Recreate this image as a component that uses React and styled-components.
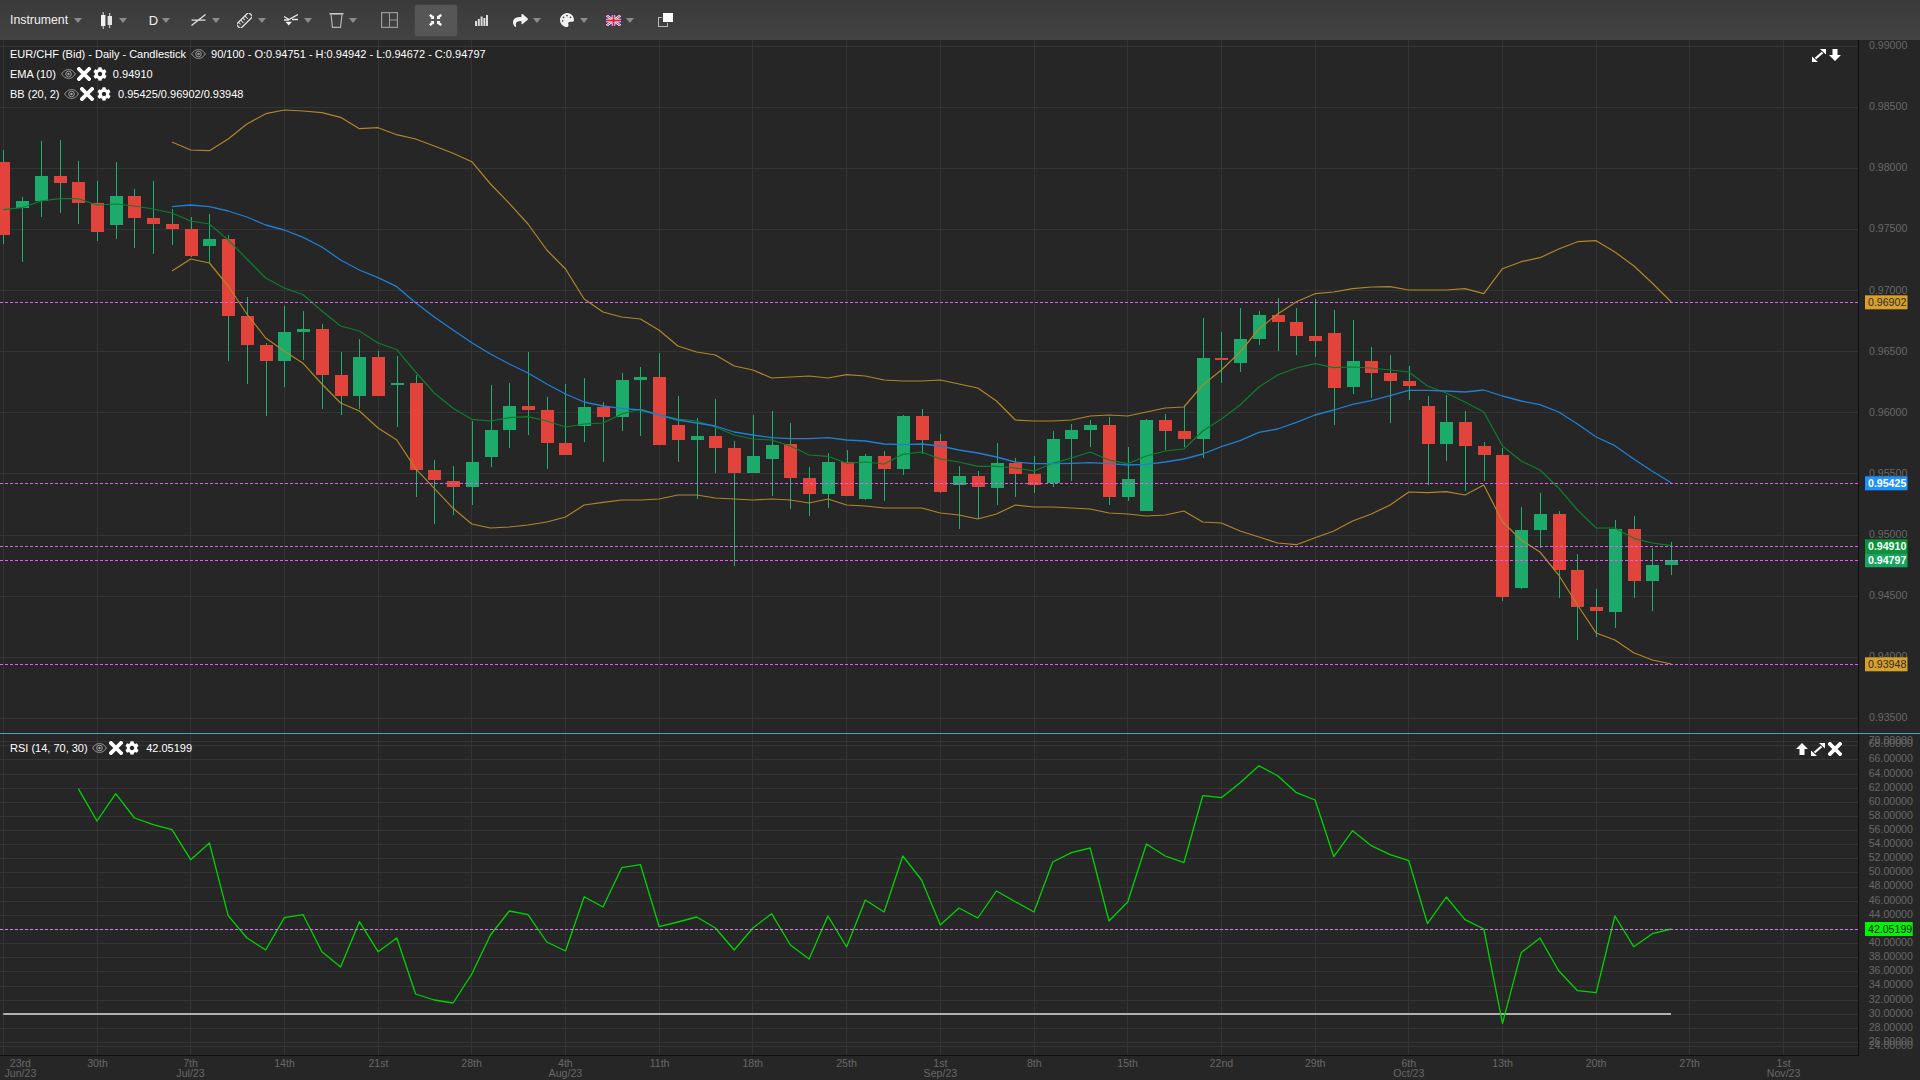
import React from 'react';
import styled, { createGlobalStyle } from 'styled-components';
import { FaCog, FaPalette, FaShare } from 'react-icons/fa';

const GlobalStyle = createGlobalStyle`
  html, body { margin: 0; padding: 0; background: #262626; }
  body { font-family: "Liberation Sans", Arial, sans-serif; overflow: hidden; }
`;

/* ---------- data ---------- */
const STEP = 18.74;
const X0 = 3.3;
const xAt = (i) => X0 + i * STEP;

const seg = (base, rows) => rows.map((r) => r.map((v) => (typeof v === 'number' ? base + v / 3 : v)));

const candles = [
  ...seg(110, [
    [120, 156, 375, 402, 'r'], [261, 273, 294, 455, 'g'], [93, 198, 273, 321, 'g'], [90, 198, 219, 309, 'r'],
    [153, 216, 279, 342, 'r'], [213, 279, 366, 393, 'r'], [156, 258, 345, 387, 'g'], [237, 258, 324, 414, 'r'],
    [213, 324, 342, 432, 'r'], [297, 342, 357, 405, 'r'], [321, 357, 438, 442, 'r'], [312, 387, 408, 460, 'g'],
    [375, 387, 618, 753, 'r'], [561, 618, 705, 822, 'r'], [699, 705, 753, 918, 'r'], [588, 666, 753, 831, 'g'],
    [603, 657, 666, 750, 'g'], [642, 657, 795, 897, 'r'], [726, 795, 858, 915, 'r'], [687, 741, 858, 897, 'g'],
    [723, 741, 858, 858, 'r'], [738, 819, 825, 951, 'g'], [795, 819, 1080, 1161, 'r'], [1050, 1080, 1110, 1242, 'r'],
    [1068, 1113, 1131, 1215, 'r'], [933, 1056, 1131, 1185, 'g'], [825, 960, 1041, 1071, 'g'], [819, 888, 960, 1014, 'g'],
    [726, 888, 900, 975, 'r'], [861, 900, 999, 1077, 'r'], [822, 999, 1035, 1035, 'r'], [804, 891, 948, 996, 'g'],
    [876, 891, 921, 1056, 'r'], [789, 810, 921, 963, 'g'],
  ]),
  ...seg(300, [
    [201, 231, 240, 408, 'g'], [159, 231, 435, 435, 'r'], [288, 375, 420, 486, 'r'], [354, 408, 420, 597, 'g'],
    [297, 408, 444, 519, 'r'], [423, 444, 519, 798, 'r'], [345, 468, 519, 519, 'g'], [333, 435, 477, 588, 'g'],
    [369, 432, 534, 627, 'r'], [501, 534, 582, 648, 'r'], [459, 486, 582, 624, 'g'], [450, 486, 588, 588, 'r'],
    [462, 468, 597, 600, 'g'], [453, 468, 507, 603, 'r'], [345, 348, 507, 525, 'g'], [327, 348, 420, 462, 'r'],
    [402, 423, 576, 579, 'r'], [498, 528, 555, 687, 'g'], [513, 528, 561, 657, 'r'], [429, 489, 564, 615, 'g'],
    [474, 489, 522, 591, 'r'], [468, 522, 555, 579, 'r'], [393, 417, 550, 561, 'g'], [372, 390, 417, 543, 'g'],
    [360, 375, 390, 441, 'g'], [351, 375, 591, 615, 'r'], [441, 537, 591, 603, 'g'], [357, 360, 633, 633, 'g'],
    [342, 360, 393, 451, 'r'], [321, 393, 417, 441, 'r'], [54, 174, 417, 474, 'g'],
  ]),
  ...seg(290, [
    [126, 204, 210, 279, 'r'], [54, 147, 219, 246, 'g'], [63, 75, 147, 165, 'g'], [24, 75, 96, 183, 'r'],
    [54, 96, 138, 195, 'r'], [27, 138, 153, 201, 'r'], [60, 129, 294, 405, 'r'], [90, 213, 291, 312, 'g'],
    [171, 213, 249, 324, 'r'], [195, 249, 273, 399, 'r'], [228, 273, 288, 330, 'r'], [318, 348, 462, 585, 'r'],
    [315, 396, 462, 513, 'g'], [363, 396, 468, 603, 'r'], [456, 468, 495, 573, 'r'], [474, 495, 921, 933, 'r'],
    [651, 720, 894, 897, 'g'], [609, 672, 720, 774, 'g'], [663, 672, 840, 924, 'r'], [792, 840, 951, 1050, 'r'],
    [897, 951, 963, 1041, 'r'], [690, 717, 966, 1014, 'g'], [678, 717, 873, 924, 'r'], [774, 825, 873, 963, 'g'],
    [756, 810, 825, 855, 'g'],
  ]),
];

const scale = (base, arr) => arr.map((v) => base + v / 3);

const upperBand = [
  ...scale(110, [96, 120, 122, 87, 42, 11, 0, 3, 8, 22, 56, 53, 74, 87, 108, 130, 155, 222, 280, 342, 420, 477, 567, 606, 621]),
  ...scale(300, [57, 91, 138, 156, 165, 198, 210, 234, 231, 228, 234, 224, 228, 240, 243, 243, 240, 252, 264, 303, 360, 363, 363, 360, 348, 345, 348, 336, 324, 321, 255, 210, 156, 87, 42]),
  301.7, 293.7, 292, 288.7, 287, 286.7, 290, 290, 290, 288.7, 293.7, 268.7, 261.7, 257.7, 249, 241.7, 240.7, 252, 265.7, 283.3, 302,
];

const lowerBand = [
  ...scale(110, [483, 447, 459, 528, 612, 684, 724, 760, 822, 879, 903, 954, 990, 1076, 1135, 1195]),
  524, 528, 527, 525, 522, 517, 505, 502.3, 500,
  ...scale(300, [600, 597, 585, 585, 594, 597, 600, 597, 600, 609, 597, 615, 618, 624, 624, 624, 639, 645, 657, 642, 615, 621, 621, 624, 627, 639, 642, 648, 645, 633, 666]),
  ...scale(290, [699, 723, 741, 759, 764, 743, 723, 693, 672, 645, 606, 608, 605, 615, 585, 695, 750, 786, 855, 945, 1029, 1050, 1088, 1110, 1122]),
];

const emaLine = [
  ...scale(110, [299, 293, 273, 266, 266, 285, 282, 288, 297, 309, 333, 342, 390, 447, 504, 534, 554, 603, 648, 663, 699, 719, 786, 849, 895, 928, 933, 923, 920, 933, 951, 942, 939, 912]),
  ...scale(300, [327, 345, 357, 363, 381, 405, 417, 420, 438, 465, 469, 490, 486, 492, 463, 456, 477, 486, 499, 499, 504, 513, 490, 474, 456, 480, 491, 468, 453, 447, 393]),
  ...scale(290, [387, 345, 291, 255, 234, 221, 233, 231, 234, 240, 246, 288, 309, 336, 366, 468, 513, 540, 594, 660, 714, 714, 745, 759, 767]),
];

const midLine = [
  ...scale(110, [290, 285, 290, 303, 321, 345, 360, 382, 411, 450, 480, 503, 530, 578, 621, 660, 698, 732, 762, 789, 822, 852, 876, 888, 895]),
  ...scale(300, [330, 345, 360, 369, 378, 396, 405, 413, 416, 416, 413, 420, 423, 432, 434, 432, 438, 450, 459, 471, 486, 491, 491, 490, 488, 491, 495, 493, 486, 477, 462]),
  ...scale(290, [470, 452, 427, 417, 397, 375, 360, 343, 332, 317, 301, 301, 303, 306, 300, 318, 333, 344, 366, 402, 441, 467, 507, 544, 578]),
];

const rsiLine = [
  ...scale(720, [206, 303, 221, 294, 314, 329, 419, 369, 587, 654, 690, 593, 584, 695, 741, 605, 695, 654, 822, 840, 849, 762, 645, 573, 584, 666, 693, 530, 561, 443, 434,
    620, 606, 591, 624, 690, 624, 581, 675, 717, 588, 681, 540, 576, 408, 480, 615, 564, 594, 513, 545, 576, 426, 398, 384, 603, 546, 372, 408, 428]),
  ...scale(740, [167, 173, 128, 77, 107, 158, 180, 350, 272, 317, 344, 362, 551, 471, 539, 567, 850, 638, 594, 692, 752, 758, 528, 620, 581, 567]),
];

const toPoints = (arr, start) => arr.map((y, i) => `${xAt(start + i).toFixed(1)},${y.toFixed(1)}`).join(' ');

const priceGrid = Array.from({ length: 12 }, (_, i) => ({
  y: 46 + i * 61.13,
  label: (0.99 - i * 0.005).toFixed(5),
}));

const rsiGridY = [65, 75, 118, 163, 205, 247, 289, 331, 373, 415, 457, 501, 544, 586, 628, 670, 712, 754, 798, 841, 883, 925, 967, 979];
const rsiGrid = rsiGridY.map((z, i) => ({ y: 720 + z / 3, label: (70 - i * 2).toFixed(5) }));

const verticals = Array.from({ length: 20 }, (_, i) => X0 + i * 93.7);

const priceLines = [302.3, 483.3, 546.3, 560.3, 664.3];
const priceTags = [
  { y: 302.3, label: '0.96902', bg: '#d7a02a', fg: '#2c2c2c' },
  { y: 483.3, label: '0.95425', bg: '#1e90ff', fg: '#ffffff' },
  { y: 546.3, label: '0.94910', bg: '#0a9438', fg: '#ffffff' },
  { y: 560.3, label: '0.94797', bg: '#17a45f', fg: '#ffffff' },
  { y: 664.3, label: '0.93948', bg: '#d7a02a', fg: '#2c2c2c' },
];

const timeLabels = [
  { x: 20.4, day: '23rd', month: 'Jun/23' }, { x: 97.5, day: '30th' }, { x: 190.5, day: '7th', month: 'Jul/23' },
  { x: 284.5, day: '14th' }, { x: 378.4, day: '21st' }, { x: 471.6, day: '28th' }, { x: 565.4, day: '4th', month: 'Aug/23' },
  { x: 659.6, day: '11th' }, { x: 752.7, day: '18th' }, { x: 846.5, day: '25th' }, { x: 940.4, day: '1st', month: 'Sep/23' },
  { x: 1034.3, day: '8th' }, { x: 1127.6, day: '15th' }, { x: 1221.4, day: '22nd' }, { x: 1315.2, day: '29th' },
  { x: 1408.8, day: '6th', month: 'Oct/23' }, { x: 1502.6, day: '13th' }, { x: 1596, day: '20th' }, { x: 1689.6, day: '27th' },
  { x: 1783.6, day: '1st', month: 'Nov/23' },
];

/* ---------- page frame ---------- */
const Page = styled.div`
  width: 1920px;
  height: 1080px;
  display: flex;
  flex-direction: column;
  background: #262626;
  overflow: hidden;
`;

const Toolbar = styled.header`
  flex: 0 0 40px;
  display: flex;
  align-items: center;
  padding-left: 10px;
  box-sizing: border-box;
  background: linear-gradient(#3a3a3a, #434343);
`;

const ToolCell = styled.div`
  flex: 0 0 ${(p) => p.$w}px;
  display: flex;
  align-items: center;
  height: 40px;
`;

const ToolLabel = styled.span`
  font-size: ${(p) => p.$size || 12.3}px;
  color: #f0f0f0;
`;

const Caret = styled.i`
  display: block;
  margin-left: ${(p) => p.$gap || 6}px;
  width: 0;
  height: 0;
  border-left: 4.7px solid transparent;
  border-right: 4.7px solid transparent;
  border-top: 5px solid #8c8c8c;
`;

const ActiveTool = styled.div`
  flex: 0 0 42px;
  height: 31px;
  margin-right: 18px;
  display: flex;
  align-items: center;
  justify-content: center;
  background: #565656;
  border-radius: 2px;
  box-shadow: 0 0 2px #555;
`;

const Panel = styled.section`
  position: relative;
  flex: 0 0 ${(p) => p.$h}px;
  height: ${(p) => p.$h}px;
`;

const ChartSvg = styled.svg`
  display: block;
  width: 1920px;
  height: 100%;
`;

const Divider = styled.div`
  flex: 0 0 1px;
  background: #4f9fbf;
`;

/* ---------- chart parts ---------- */
const GridLine = styled.line`
  stroke: #343434;
  stroke-width: 1;
  shape-rendering: crispEdges;
`;

const EdgeLine = styled.line`
  stroke: #0e0e0e;
  stroke-width: 1;
  shape-rendering: crispEdges;
`;

const DashLine = styled.line`
  stroke: ${(p) => p.$color};
  stroke-width: 1;
  stroke-dasharray: 3 2;
  shape-rendering: crispEdges;
`;

const Trace = styled.polyline`
  fill: none;
  stroke: ${(p) => p.$color};
  stroke-width: ${(p) => p.$w};
  stroke-linejoin: round;
`;

const Wick = styled.rect`
  fill: #1fae6e;
  shape-rendering: crispEdges;
`;

const Body = styled.rect`
  fill: ${(p) => (p.$up ? '#1cab6b' : '#e2443b')};
  shape-rendering: crispEdges;
`;

const AxisText = styled.text`
  font-family: "Liberation Sans", Arial, sans-serif;
  font-size: 10.6px;
  fill: #686868;
`;

const TagBox = styled.rect`
  fill: ${(p) => p.$bg};
`;

const TagText = styled.text`
  font-family: "Liberation Sans", Arial, sans-serif;
  font-size: 10.6px;
  font-weight: ${(p) => (p.$heavy ? 700 : 400)};
  fill: ${(p) => p.$fg};
`;

/* ---------- legend overlays ---------- */
const Legend = styled.div`
  position: absolute;
  left: 10px;
  top: ${(p) => p.$top}px;
  display: flex;
  flex-direction: column;
  color: #ffffff;
  font-size: 11px;
`;

const LegendRow = styled.div`
  display: flex;
  align-items: center;
  height: 20px;
  white-space: nowrap;
`;

const LegendValue = styled.span`
  margin-left: ${(p) => p.$gap}px;
`;

const IconSlot = styled.span`
  display: inline-flex;
  margin-left: ${(p) => p.$gap}px;
  color: #fff;
`;

const PanelTools = styled.div`
  position: absolute;
  right: ${(p) => p.$right}px;
  top: ${(p) => p.$top}px;
  display: flex;
  align-items: center;
  gap: ${(p) => p.$gap}px;
`;

/* ---------- icons ---------- */
const EyeIcon = () => (
  <svg width="15" height="10" viewBox="0 0 15 10">
    <path d="M0.6 5 C3 1.4 5.3 0.6 7.5 0.6 C9.7 0.6 12 1.4 14.4 5 C12 8.6 9.7 9.4 7.5 9.4 C5.3 9.4 3 8.6 0.6 5 Z" fill="none" stroke="#a8a8a8" strokeWidth="0.9" />
    <circle cx="7.5" cy="5" r="2.8" fill="none" stroke="#a8a8a8" strokeWidth="0.9" />
    <circle cx="7.5" cy="5" r="1.2" fill="#a8a8a8" />
  </svg>
);

const CrossIcon = () => (
  <svg width="14" height="14" viewBox="0 0 14 14">
    <path d="M2 2 L12 12 M12 2 L2 12" stroke="#fff" strokeWidth="3.8" strokeLinecap="square" />
  </svg>
);

const GearIcon = () => <FaCog size={14} />;

const ExpandIcon = () => (
  <svg width="14" height="13" viewBox="0 0 14 13">
    <path d="M3.5 9.5 L10.5 3.5" stroke="#fff" strokeWidth="2.3" />
    <path d="M14 0 L8 0 L14 5.5 Z M0 13 L6 13 L0 7.5 Z" fill="#fff" />
  </svg>
);

const ArrowUp = () => (
  <svg width="12" height="12" viewBox="0 0 12 12">
    <path d="M6 0 L12 6 L8.5 6 L8.5 12 L3.5 12 L3.5 6 L0 6 Z" fill="#fff" />
  </svg>
);

const ArrowDown = () => (
  <svg width="12" height="12" viewBox="0 0 12 12">
    <path d="M6 12 L12 6 L8.5 6 L8.5 0 L3.5 0 L3.5 6 L0 6 Z" fill="#fff" />
  </svg>
);

const CandleIcon = () => (
  <svg width="11" height="17" viewBox="0 0 11 17">
    <path d="M2.2 0 V17 M8.7 1 V16" stroke="#ddd" strokeWidth="1" />
    <rect x="0" y="3" width="4.4" height="11" fill="#f2f2f2" />
    <rect x="6.6" y="4" width="4.4" height="9" fill="#e4e4e4" />
  </svg>
);

const LineToolIcon = () => (
  <svg width="15" height="12" viewBox="0 0 15 12">
    <path d="M0.5 11.5 L14.5 0.5 M0.5 6.2 H14.5" stroke="#e0e0e0" strokeWidth="1.3" fill="none" />
  </svg>
);

const RulerIcon = () => (
  <svg width="15" height="15" viewBox="0 0 15 15">
    <g transform="rotate(-45 7.5 7.5)">
      <rect x="-1.2" y="4.5" width="17.4" height="6" fill="none" stroke="#e0e0e0" strokeWidth="1.3" />
      <path d="M2 4.5 V7.5 M5 4.5 V8.5 M8 4.5 V7.5 M11 4.5 V8.5" stroke="#e0e0e0" strokeWidth="1" />
    </g>
  </svg>
);

const TrendIcon = () => (
  <svg width="14" height="12" viewBox="0 0 14 12">
    <path d="M0 2.5 L5 5.5 L14 0.5 M0 6 H5 M8 5.5 H14" stroke="#e8e8e8" strokeWidth="1.3" fill="none" />
    <path d="M1.5 7.8 H8 L4.7 11.5 Z" fill="#f0f0f0" />
  </svg>
);

const TrashIcon = () => (
  <svg width="15" height="16" viewBox="0 0 15 16">
    <path d="M0.5 1.8 H14.5" stroke="#c8c8c8" strokeWidth="1.6" />
    <path d="M2 2.5 L3.5 15.3 H11.5 L13 2.5" stroke="#b4b4b4" strokeWidth="1.2" fill="none" />
  </svg>
);

const LayoutIcon = () => (
  <svg width="17" height="16" viewBox="0 0 17 16">
    <rect x="0.6" y="0.6" width="15.8" height="14.8" fill="none" stroke="#9a9a9a" strokeWidth="1.2" />
    <path d="M8.5 0.6 V15.4 M8.5 8 H16.4" stroke="#9a9a9a" strokeWidth="1.1" />
  </svg>
);

const CompressIcon = () => (
  <svg width="13" height="12" viewBox="0 0 13 12">
    <path d="M0.8 0.8 L3.5 3.2 M12.2 0.8 L9.5 3.2 M0.8 11.2 L3.5 8.8 M12.2 11.2 L9.5 8.8" stroke="#fff" strokeWidth="2.4" />
    <path d="M5 1.5 V5 H1.5 Z M8 1.5 V5 H11.5 Z M5 10.5 V7 H1.5 Z M8 10.5 V7 H11.5 Z" fill="#fff" />
  </svg>
);

const BarsIcon = () => (
  <svg width="13" height="11" viewBox="0 0 13 11">
    <path d="M0 6 H2 V11 H0 Z M2.8 4 H4.8 V11 H2.8 Z M5.6 1.5 H7.6 V11 H5.6 Z M8.4 3 H10.4 V11 H8.4 Z M11 0 H13 V11 H11 Z" fill="#dcdcdc" />
  </svg>
);

const FlagIcon = () => (
  <svg width="15" height="11" viewBox="0 0 30 22">
    <rect width="30" height="22" fill="#22308c" />
    <path d="M0 0 L30 22 M30 0 L0 22" stroke="#fff" strokeWidth="5" />
    <path d="M0 0 L30 22 M30 0 L0 22" stroke="#d4213d" strokeWidth="2" />
    <path d="M15 0 V22 M0 11 H30" stroke="#fff" strokeWidth="7" />
    <path d="M15 0 V22 M0 11 H30" stroke="#d4213d" strokeWidth="4" />
  </svg>
);

const CopyIcon = () => (
  <svg width="15" height="14" viewBox="0 0 15 14">
    <rect x="0.5" y="4.5" width="9" height="9" fill="none" stroke="#b8b8b8" strokeWidth="1" />
    <rect x="3.8" y="0" width="11.2" height="10" fill="#3e3e3e" />
    <rect x="5" y="0" width="10" height="9" fill="#fff" />
  </svg>
);

/* ---------- chart assemblies ---------- */
const Candle = ({ index, data }) => {
  const [wickTop, top, bottom, wickBottom, side] = data;
  const cx = Math.round(xAt(index));
  return (
    <g>
      <Wick x={cx} y={wickTop} width={1} height={wickBottom - wickTop} />
      <Body $up={side === 'g'} x={cx - 6} y={top} width={13} height={bottom - top} />
    </g>
  );
};

const PriceChart = () => (
  <ChartSvg viewBox="0 40 1920 693">
    {priceGrid.map((g) => (
      <GridLine key={g.label} x1="0" x2="1858" y1={g.y} y2={g.y} />
    ))}
    {verticals.map((x) => (
      <GridLine key={x} x1={x} x2={x} y1="40" y2="733" />
    ))}
    {priceGrid.map((g) => (
      <AxisText key={g.label} x="1869" y={g.y + 3}>{g.label}</AxisText>
    ))}
    {candles.map((c, i) => (
      <Candle key={i} index={i} data={c} />
    ))}
    <Trace $color="#0d7f2c" $w={1.2} points={toPoints(emaLine, 0)} />
    <Trace $color="#1f7fd6" $w={1.3} points={toPoints(midLine, 9)} />
    <Trace $color="#b0862b" $w={1.2} points={toPoints(upperBand, 9)} />
    <Trace $color="#b0862b" $w={1.2} points={toPoints(lowerBand, 9)} />
    {priceLines.map((y) => (
      <DashLine key={y} $color="#e35df7" x1="0" x2="1858" y1={y} y2={y} />
    ))}
    <EdgeLine x1="1858" x2="1858" y1="40" y2="733" />
    {priceTags.map((t) => (
      <g key={t.label}>
        <TagBox $bg={t.bg} x="1865" y={t.y - 7} width="42.5" height="14" />
        <TagText $fg={t.fg} $heavy={t.fg === '#ffffff'} x="1868" y={t.y + 3.8}>{t.label}</TagText>
      </g>
    ))}
  </ChartSvg>
);

const RsiChart = () => (
  <ChartSvg viewBox="0 734 1920 322">
    {rsiGrid.map((g) => (
      <GridLine key={g.label} x1="0" x2="1858" y1={g.y} y2={g.y} />
    ))}
    {verticals.map((x) => (
      <GridLine key={x} x1={x} x2={x} y1="734" y2="1056" />
    ))}
    {rsiGrid.map((g) => (
      <AxisText key={g.label} x="1868.7" y={g.y + 2.4}>{g.label}</AxisText>
    ))}
    <Trace $color="#b0b0b0" $w={2} points={`${X0},1014 1671,1014`} />
    <Trace $color="#00d400" $w={1.3} points={toPoints(rsiLine, 4)} />
    <DashLine $color="#cf7ee2" x1="0" x2="1858" y1="929.3" y2="929.3" />
    <EdgeLine x1="1858" x2="1858" y1="734" y2="1056" />
    <EdgeLine x1="0" x2="1858" y1="1055.5" y2="1055.5" />
    <TagBox $bg="#00f500" x="1865" y="922" width="47.7" height="14" />
    <TagText $fg="#0a0a0a" x="1868" y="933.2">42.05199</TagText>
  </ChartSvg>
);

const TimeAxis = () => (
  <ChartSvg viewBox="0 1056 1920 24">
    {timeLabels.map((t) => (
      <g key={t.x}>
        <AxisText x={t.x} y="1066.8" textAnchor="middle">{t.day}</AxisText>
        {t.month && <AxisText x={t.x} y="1077" textAnchor="middle">{t.month}</AxisText>}
      </g>
    ))}
  </ChartSvg>
);

const ToolMenu = ({ w, gap, children }) => (
  <ToolCell $w={w}>
    {children}
    <Caret $gap={gap} />
  </ToolCell>
);

export default function App() {
  return (
    <Page>
      <GlobalStyle />
      <Toolbar>
        <ToolMenu w={91} gap={6}><ToolLabel>Instrument</ToolLabel></ToolMenu>
        <ToolMenu w={47.7} gap={7}><CandleIcon /></ToolMenu>
        <ToolMenu w={42.3} gap={4}><ToolLabel $size={13}>D</ToolLabel></ToolMenu>
        <ToolMenu w={46}><LineToolIcon /></ToolMenu>
        <ToolMenu w={46.7}><RulerIcon /></ToolMenu>
        <ToolMenu w={45}><TrendIcon /></ToolMenu>
        <ToolMenu w={52.3} gap={5.5}><TrashIcon /></ToolMenu>
        <ToolCell $w={34}><LayoutIcon /></ToolCell>
        <ActiveTool><CompressIcon /></ActiveTool>
        <ToolCell $w={38}><BarsIcon /></ToolCell>
        <ToolMenu w={47} gap={5.5}>
          <FaShare size={15} color="#f2f2f2" />
        </ToolMenu>
        <ToolMenu w={45.7}>
          <FaPalette size={14} color="#f2f2f2" />
        </ToolMenu>
        <ToolMenu w={52.3} gap={5}><FlagIcon /></ToolMenu>
        <ToolCell $w={20}><CopyIcon /></ToolCell>
      </Toolbar>

      <Panel $h={693}>
        <PriceChart />
        <Legend $top={4}>
          <LegendRow>
            EUR/CHF (Bid) - Daily - Candlestick
            <IconSlot $gap={5}><EyeIcon /></IconSlot>
            <LegendValue $gap={5}>90/100 - O:0.94751 - H:0.94942 - L:0.94672 - C:0.94797</LegendValue>
          </LegendRow>
          <LegendRow>
            EMA (10)
            <IconSlot $gap={5}><EyeIcon /></IconSlot>
            <IconSlot $gap={1}><CrossIcon /></IconSlot>
            <IconSlot $gap={2}><GearIcon /></IconSlot>
            <LegendValue $gap={6}>0.94910</LegendValue>
          </LegendRow>
          <LegendRow>
            BB (20, 2)
            <IconSlot $gap={4}><EyeIcon /></IconSlot>
            <IconSlot $gap={1.5}><CrossIcon /></IconSlot>
            <IconSlot $gap={3}><GearIcon /></IconSlot>
            <LegendValue $gap={7}>0.95425/0.96902/0.93948</LegendValue>
          </LegendRow>
        </Legend>
        <PanelTools $right={79} $top={8.5} $gap={3}>
          <ExpandIcon />
          <ArrowDown />
        </PanelTools>
      </Panel>

      <Divider />

      <Panel $h={322}>
        <RsiChart />
        <Legend $top={4}>
          <LegendRow>
            RSI (14, 70, 30)
            <IconSlot $gap={4}><EyeIcon /></IconSlot>
            <IconSlot $gap={2}><CrossIcon /></IconSlot>
            <IconSlot $gap={2.5}><GearIcon /></IconSlot>
            <LegendValue $gap={7}>42.05199</LegendValue>
          </LegendRow>
        </Legend>
        <PanelTools $right={78} $top={8} $gap={3}>
          <ArrowUp />
          <ExpandIcon />
          <CrossIcon />
        </PanelTools>
      </Panel>

      <Panel $h={24}>
        <TimeAxis />
      </Panel>
    </Page>
  );
}
